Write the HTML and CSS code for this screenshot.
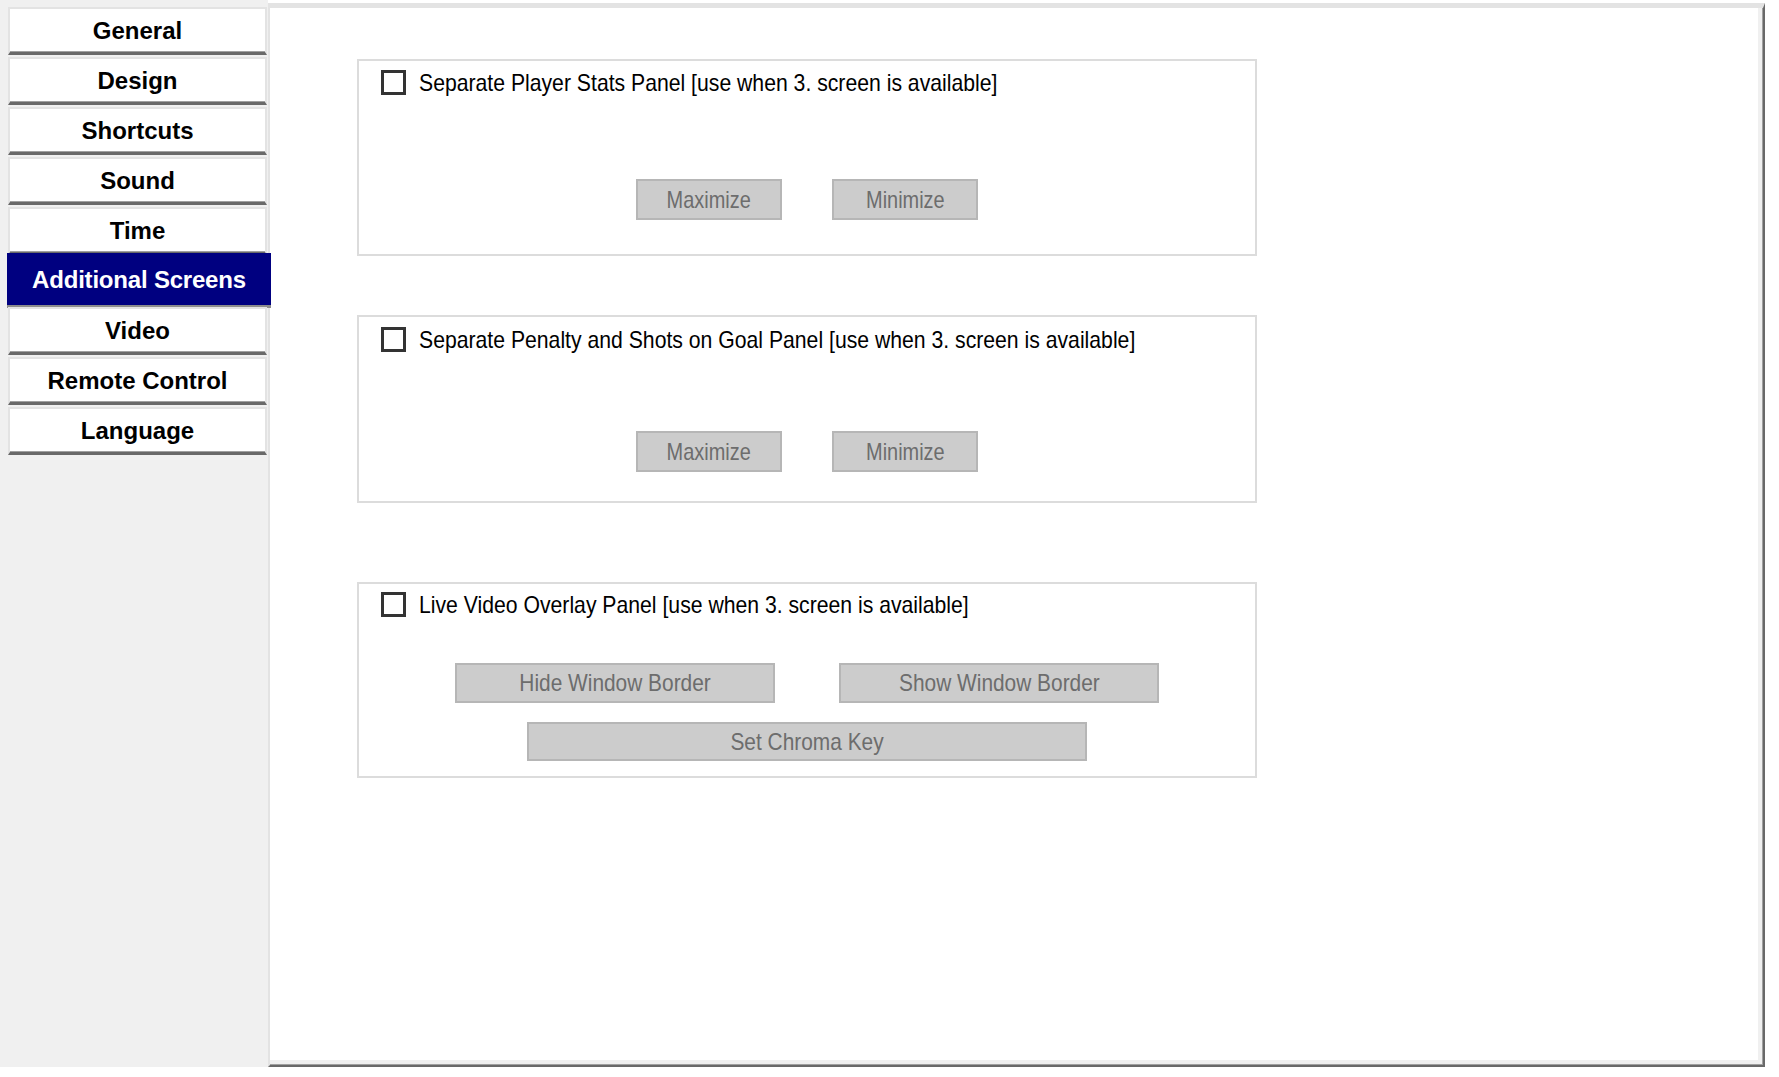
FILE: index.html
```html
<!DOCTYPE html>
<html>
<head>
  <title>Settings - Additional Screens</title>
  <link rel="stylesheet" href="styles.css">
</head>
<body>
  <div class="window">
    <div class="tabs">
      <div class="tab">General</div>
      <div class="tab">Design</div>
      <div class="tab">Shortcuts</div>
      <div class="tab">Sound</div>
      <div class="tab">Time</div>
      <div class="tab active">Additional Screens</div>
      <div class="tab">Video</div>
      <div class="tab">Remote Control</div>
      <div class="tab">Language</div>
    </div>

    <div class="page">
      <div class="group group-stats">
        <label class="check"><span class="box"></span><span class="narrow">Separate Player Stats Panel [use when 3. screen is available]</span></label>
        <div class="actions">
          <button class="btn btn-small"><span class="narrow">Maximize</span></button>
          <button class="btn btn-small"><span class="narrow">Minimize</span></button>
        </div>
      </div>

      <div class="group group-penalty">
        <label class="check"><span class="box"></span><span class="narrow">Separate Penalty and Shots on Goal Panel [use when 3. screen is available]</span></label>
        <div class="actions">
          <button class="btn btn-small"><span class="narrow">Maximize</span></button>
          <button class="btn btn-small"><span class="narrow">Minimize</span></button>
        </div>
      </div>

      <div class="group group-overlay">
        <label class="check"><span class="box"></span><span class="narrow">Live Video Overlay Panel [use when 3. screen is available]</span></label>
        <div class="actions actions-wide">
          <button class="btn btn-wide"><span class="narrow">Hide Window Border</span></button>
          <button class="btn btn-wide"><span class="narrow">Show Window Border</span></button>
        </div>
        <div class="actions actions-chroma">
          <button class="btn btn-chroma"><span class="narrow">Set Chroma Key</span></button>
        </div>
      </div>
    </div>
  </div>
</body>
</html>
```

FILE: styles.css
```css
body {
  margin: 0;
  padding: 0;
  background-color: #fff;
  font-family: "Liberation Sans", Arial, sans-serif;
}

.window {
  display: flex;
  align-items: flex-start;
}

/* left tab strip */
.tabs {
  width: 268px;
  height: 1067px;
  box-sizing: border-box;
  padding: 7px 0 0 8px;
  background-color: #f0f0f0;
  position: relative;
  z-index: 1;
}

.tab {
  box-sizing: border-box;
  width: 259px;
  height: 48px;
  margin-bottom: 2px;
  background-color: #fff;
  border: 2px solid #e3e3e3;
  border-bottom: 3px solid #696969;
  box-shadow: inset 0 -1px 0 #a0a0a0;
  display: flex;
  align-items: center;
  justify-content: center;
  font-weight: bold;
  font-size: 24px;
  color: #000;
}

.tab.active {
  width: 264px;
  height: 55px;
  margin: -4px -4px -1px -1px;
  background-color: #000080;
  border: none;
  border-bottom: 3px solid #8c8c8c;
  box-shadow: none;
  color: #fff;
  padding-top: 2px;
  letter-spacing: -0.2px;
}

/* right page */
.page {
  box-sizing: border-box;
  width: 1497px;
  height: 1064px;
  margin-top: 3px;
  background-color: #fff;
  border-top: 5px solid #e3e3e3;
  border-left: 2px solid #e3e3e3;
  border-right: 2px solid #696969;
  border-bottom: 2px solid #696969;
  box-shadow: inset -1px -1px 0 #a0a0a0, inset -5px -5px 0 #f0f0f0;
  padding: 51px 0 0 87px;
}

.group {
  box-sizing: border-box;
  width: 900px;
  border: 2px solid #dcdcdc;
  padding-left: 22px;
}

.group-stats {
  padding-top: 9px;
  padding-bottom: 34px;
  margin-bottom: 59px;
}

.group-penalty {
  padding-top: 10px;
  padding-bottom: 29px;
  margin-bottom: 79px;
}

.group-overlay {
  padding-top: 8px;
  padding-bottom: 15px;
}

/* the dialog font is a condensed sans */
.narrow {
  display: inline-block;
  transform: scaleX(0.87);
  white-space: nowrap;
}

.check {
  display: flex;
  align-items: center;
  font-size: 24px;
  color: #000;
  height: 25px;
}

.check .narrow {
  transform: scaleX(0.883);
  transform-origin: left center;
}

.box {
  box-sizing: border-box;
  width: 25px;
  height: 25px;
  border: 3px solid #333;
  background-color: #fff;
  margin-right: 13px;
  flex-shrink: 0;
}

.actions {
  display: flex;
  justify-content: center;
  gap: 50px;
  margin-left: -22px;
}

.group-stats .actions { margin-top: 84px; }
.group-penalty .actions { margin-top: 79px; }
.group-overlay .actions-wide { margin-top: 46px; gap: 64px; }
.group-overlay .actions-chroma { margin-top: 19px; }

.btn {
  box-sizing: border-box;
  height: 41px;
  background-color: #cccccc;
  border: 2px solid #b6b6b6;
  color: #6d6d6d;
  font-family: "Liberation Sans", Arial, sans-serif;
  font-size: 24px;
  padding: 0;
}

.btn-small { width: 146px; }
.btn-small .narrow { transform: scaleX(0.83); }
.btn-wide { width: 320px; height: 40px; }
.btn-chroma { width: 560px; height: 39px; }
```
